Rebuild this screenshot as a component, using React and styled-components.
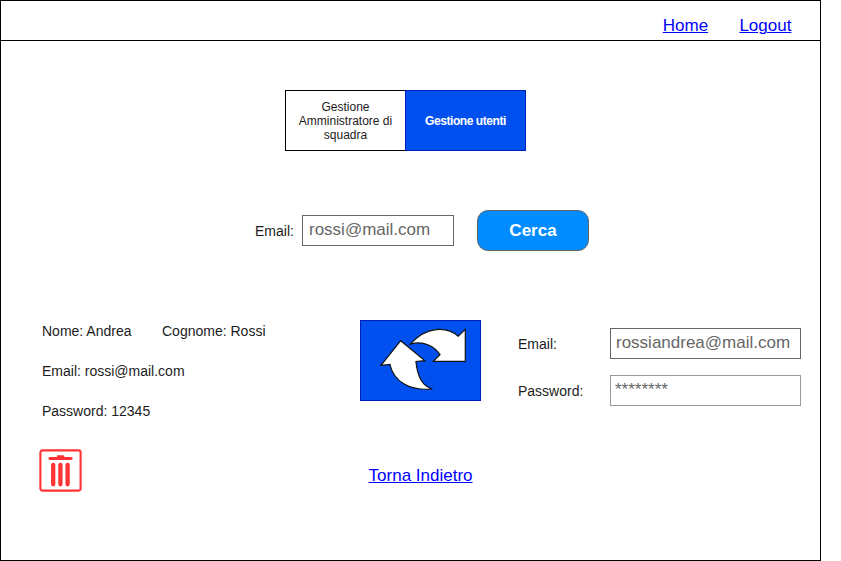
import React from "react";
import styled, { createGlobalStyle } from "styled-components";

const GlobalStyle = createGlobalStyle`
  * { box-sizing: border-box; }
  body {
    margin: 0;
    background: #fff;
    color: #1c1c1c;
    font-family: "Liberation Sans", Arial, sans-serif;
  }
`;

const Page = styled.div`
  width: 821px;
  height: 561px;
  border: 1px solid #000;
  display: flex;
  flex-direction: column;
`;

const Header = styled.header`
  height: 40px;
  border-bottom: 1px solid #000;
  display: flex;
  justify-content: flex-end;
  gap: 31.3px;
  padding: 15px 28.6px 0 0;
`;

const Link = styled.a`
  font-size: 17px;
  line-height: 19px;
  color: #0000ff;
  text-decoration: underline;
  text-decoration-thickness: 1px;
`;

const Tabs = styled.nav`
  display: flex;
  width: 241px;
  margin: 49px 0 0 284px;
`;

const Tab = styled.button`
  width: ${(p) => (p.$active ? 121 : 120)}px;
  height: 61px;
  padding: 0 10px;
  border: 1px solid ${(p) => (p.$active ? "#001dbc" : "#000")};
  ${(p) => !p.$active && "border-right: 0;"}
  background: ${(p) => (p.$active ? "#0050ef" : "#fff")};
  color: ${(p) => (p.$active ? "#fff" : "#1c1c1c")};
  font: ${(p) => (p.$active ? "bold" : "normal")} 12px/14px "Liberation Sans", Arial, sans-serif;
  letter-spacing: ${(p) => (p.$active ? "-0.43px" : "normal")};
`;

const SearchRow = styled.form`
  display: flex;
  align-items: center;
  height: 41px;
  margin: 59px 0 0 254px;
`;

const Label = styled.label`
  width: ${(p) => p.$width}px;
  font-size: 14px;
  line-height: 16px;
`;

const Input = styled.input`
  width: ${(p) => p.$width}px;
  height: 31px;
  margin: 0;
  padding: ${(p) => p.$pad || "0 5px 1px"};
  border: 1px solid ${(p) => p.$border || "#666"};
  border-radius: 0;
  background: #fff;
  color: #666;
  font: 17px "Liberation Sans", Arial, sans-serif;
  outline: none;
`;

const SearchButton = styled.button`
  width: 112px;
  height: 41px;
  margin-left: 23px;
  padding: 0;
  border: 1px solid #666;
  border-radius: 11px;
  background: #008cff;
  color: #fff;
  font: bold 17px "Liberation Sans", Arial, sans-serif;
`;

const Details = styled.section`
  display: flex;
  align-items: flex-start;
  margin-top: 69px;
  height: 129px;
  padding-left: 41px;
`;

const UserInfo = styled.div`
  width: 318px;
  padding-top: 3px;
  display: flex;
  flex-direction: column;
  gap: 24px;
`;

const InfoRow = styled.div`
  display: flex;
  gap: 30.5px;
  font-size: 14px;
  line-height: 16px;
`;

const UpdateButton = styled.button`
  width: 121px;
  height: 81px;
  padding: 0;
  border: 1px solid #001dbc;
  background: #0050ef;

  svg { display: block; }
`;

const EditForm = styled.form`
  display: flex;
  flex-direction: column;
  gap: 16px;
  padding: 8px 0 0 37px;
`;

const Field = styled.div`
  display: flex;
  align-items: center;
`;

const Footer = styled.footer`
  display: flex;
  padding-left: 38px;
`;

const DeleteButton = styled.button`
  width: 43px;
  height: 43px;
  margin-right: 286.6px;
  padding: 0;
  border: 0;
  background: none;

  svg { display: block; }
`;

const BackLink = styled(Link)`
  padding-top: 17px;
`;

function RefreshIcon() {
  return (
    <svg width="119" height="79" viewBox="1 1 119 79" fill="#fff" stroke="#111" strokeWidth="1.2">
      <path d="M40.7 20.7 L65 40.7 L55.9 41.5 C57 53 61 66 72.5 69 C49 71 33.5 61 30 44.5 L21 45.3 Z" />
      <path d="M50.3 24.2 C66 6 87 6 98.2 16.2 L105.3 9.3 L105.3 41.3 L73.3 41.3 L80 34.6 C75 27 64 20 50.3 24.2 Z" />
    </svg>
  );
}

function TrashIcon() {
  return (
    <svg width="43" height="43" viewBox="0 0 43 43" fill="none" stroke="#ff3333" strokeLinecap="round">
      <rect x="1.4" y="1.4" width="40.2" height="40.2" rx="2" strokeWidth="2.1" />
      <path d="M10.8 9.5 H32.2" strokeWidth="2.8" />
      <path d="M18.8 7.3 H24.4" strokeWidth="2" />
      <path d="M14.2 15.8 V35.3 M21.4 15.8 V35.3 M28.6 15.8 V35.3" strokeWidth="4.3" />
    </svg>
  );
}

export default function App() {
  return (
    <>
      <GlobalStyle />
      <Page>
        <Header>
          <Link href="#home">Home</Link>
          <Link href="#logout">Logout</Link>
        </Header>
        <Tabs>
          <Tab>Gestione Amministratore di squadra</Tab>
          <Tab $active>Gestione utenti</Tab>
        </Tabs>
        <SearchRow>
          <Label $width={47}>Email:</Label>
          <Input $width={152} $pad="0 5px 1px 6px" defaultValue="rossi@mail.com" />
          <SearchButton type="button">Cerca</SearchButton>
        </SearchRow>
        <Details>
          <UserInfo>
            <InfoRow>
              <span>Nome: Andrea</span>
              <span>Cognome: Rossi</span>
            </InfoRow>
            <InfoRow>Email: rossi@mail.com</InfoRow>
            <InfoRow>Password: 12345</InfoRow>
          </UserInfo>
          <UpdateButton aria-label="Aggiorna">
            <RefreshIcon />
          </UpdateButton>
          <EditForm>
            <Field>
              <Label $width={92}>Email:</Label>
              <Input $width={191} defaultValue="rossiandrea@mail.com" />
            </Field>
            <Field>
              <Label $width={92}>Password:</Label>
              <Input $width={191} $border="#999" $pad="0 5px 1px 4px" defaultValue="********" />
            </Field>
          </EditForm>
        </Details>
        <Footer>
          <DeleteButton aria-label="Elimina">
            <TrashIcon />
          </DeleteButton>
          <BackLink href="#indietro">Torna Indietro</BackLink>
        </Footer>
      </Page>
    </>
  );
}
